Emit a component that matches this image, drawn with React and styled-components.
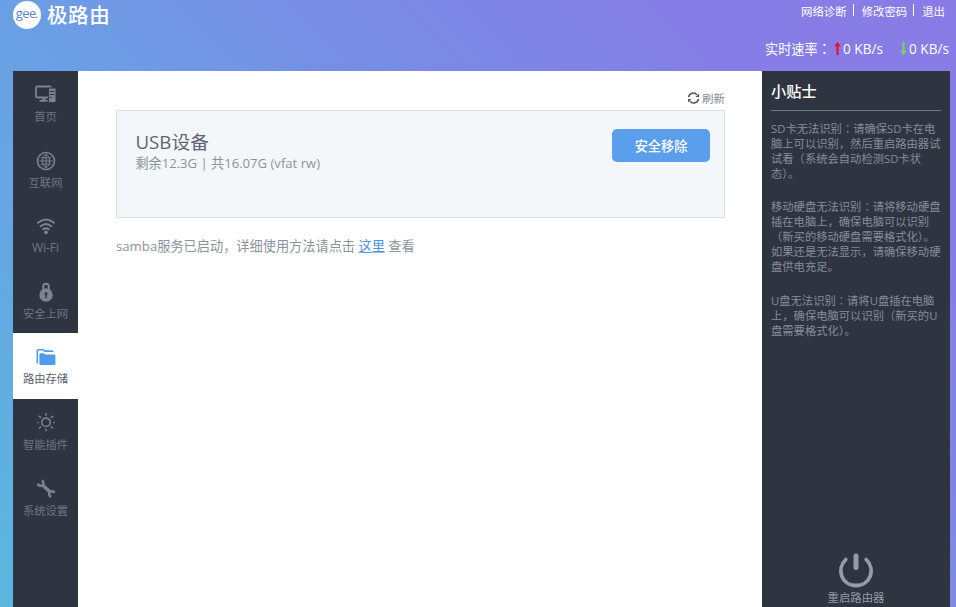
import styled, { createGlobalStyle } from "styled-components";

const menu = [
  { name: "首页", icon: "home" },
  { name: "互联网", icon: "globe" },
  { name: "Wi-Fi", icon: "wifi", latin: true },
  { name: "安全上网", icon: "lock" },
  { name: "路由存储", icon: "folder", active: true },
  { name: "智能插件", icon: "plugin" },
  { name: "系统设置", icon: "wrench" },
];

const tips = [
  [
    "SD卡无法识别：请确保SD卡在电",
    "脑上可以识别，然后重启路由器试",
    "试看（系统会自动检测SD卡状",
    "态）。",
  ],
  [
    "移动硬盘无法识别：请将移动硬盘",
    "插在电脑上，确保电脑可以识别",
    "（新买的移动硬盘需要格式化）。",
    "如果还是无法显示，请确保移动硬",
    "盘供电充足。",
  ],
  [
    "U盘无法识别：请将U盘插在电脑",
    "上，确保电脑可以识别（新买的U",
    "盘需要格式化）。",
  ],
];

const shapes = {
  home: (
    <>
      <rect x="2" y="2.5" width="15" height="11" rx="1.2" fill="none" stroke="currentColor" strokeWidth="1.8" />
      <path d="M8.5 13.5h3v3h-3zM5.5 16h8v1.8h-8z" />
      <rect x="14.6" y="4" width="7.4" height="14.6" rx="1" stroke="#2f3441" strokeWidth="1" />
      <path d="M16 7.5h4.400M16 10.5h4.400M16 13.5h2" stroke="#2f3441" />
    </>
  ),
  globe: (
    <g fill="none" stroke="currentColor">
      <circle cx="12" cy="11" r="8.5" strokeWidth="1.6" />
      <ellipse cx="12" cy="11" rx="3.600" ry="6.400" />
      <path d="M12 4.500v13M5.500 11h13M6.800 7.800h10.400M6.800 14.200h10.400" />
    </g>
  ),
  wifi: (
    <>
      <g fill="none" stroke="currentColor" strokeWidth="1.9" strokeLinecap="round">
        <path d="M4 7.8q8-6.8 16 0M6.6 11.2q5.4-4.6 10.8 0M9.2 14.4q2.8-2.4 5.6 0" />
      </g>
      <circle cx="12" cy="17.3" r="1.9" />
    </>
  ),
  lock: (
    <>
      <path d="M9.200 9V5.500a2.800 2.800 0 0 1 5.600 0V9" fill="none" stroke="currentColor" strokeWidth="2" />
      <circle cx="12" cy="14" r="6.700" />
      <circle cx="12" cy="12.8" r="1.5" fill="#2f3441" />
      <path d="M12 13v4.2" stroke="#2f3441" strokeWidth="1.4" />
    </>
  ),
  folder: (
    <>
      <path d="M3.3 17.5V5q0-1.3 1.3-1.3h4.6l1.6 1.4h7q1.2 0 1.2 1" fill="none" stroke="currentColor" strokeWidth="1.6" />
      <path d="M5.400 8.300q0-1 1-1H10l1.300 1.300h8.900q1.200 0 1.200 1.200v8q0 1.200-1.200 1.200H6.600q-1.200 0-1.200-1.200z" />
    </>
  ),
  plugin: (
    <g fill="none" stroke="currentColor" strokeWidth="1.6" strokeLinecap="round">
      <circle cx="12" cy="10.300" r="4.200" />
      <path d="M12 1.900v1.200M12 17.300v1.400M4.200 10.500h-.3M19.800 10.500h.4M5.300 4.300l1.300 1M18.700 4.300l-1.300 1M6.600 15l-1.200 1M17.400 15l1.200 1" />
    </g>
  ),
  wrench: (
    <g fill="none" stroke="currentColor">
      <path d="M3.800 5.600C4.600 8 7 8.300 8.500 7.200S9.600 3.400 7.800 2.400" strokeWidth="2.500" />
      <path d="M8.300 6.800l7.700 7.200" strokeWidth="3.400" />
      <path d="M20.600 14.800C19.200 12.700 16.800 12.800 15.700 14.200S15 18 17 19" strokeWidth="2.500" />
    </g>
  ),
};

const MenuIcon = ({ name }) => (
  <svg width="24" height="21" viewBox="0 0 24 21" fill="currentColor">
    {shapes[name]}
  </svg>
);

const Arrow = ({ down }) => (
  <ArrowIcon viewBox="0 0 7 13" $down={down}>
    <path d="M3.500 0 7 4.300H4.600V13H2.400V4.300H0z" />
  </ArrowIcon>
);

// keeps the full-width colon in the middle of its cell
const Line = ({ text }) => {
  const [head, tail] = text.split("：");
  return (
    <span>
      {head}
      {tail !== undefined && <Colon>：</Colon>}
      {tail}
    </span>
  );
};

const App = () => {
  return (
    <Page>
      <GlobalStyle />
      <Header>
        <Brand>
          <Badge>
            gee<i>.</i>
          </Badge>
          <BrandName>极路由</BrandName>
        </Brand>
        <HeaderRight>
          <Links>
            <a>网络诊断</a>
            <Divider />
            <a>修改密码</a>
            <Divider />
            <a>退出</a>
          </Links>
          <Speed>
            <SpeedLabel>
              <Line text="实时速率：" />
            </SpeedLabel>
            <Arrow />
            <Rate>0 KB/s</Rate>
            <Arrow down />
            <Rate>0 KB/s</Rate>
          </Speed>
        </HeaderRight>
      </Header>

      <Body>
        <Sidebar>
          {menu.map((item) => (
            <MenuItem key={item.name} $active={item.active}>
              <MenuIcon name={item.icon} />
              <MenuText $latin={item.latin}>{item.name}</MenuText>
            </MenuItem>
          ))}
        </Sidebar>

        <Main>
          <Refresh>
            <svg width="13" height="12" viewBox="0 0 13 12" fill="none" stroke="#555" strokeWidth="1.5">
              <path d="M1.600 5.200A4.700 4.700 0 0 1 10 2.900M11.400 6.800A4.700 4.700 0 0 1 3 9.100" />
              <path d="M12 1.500v3.600H8.600zM1 10.500V6.900h3.400z" fill="#555" stroke="none" />
            </svg>
            刷新
          </Refresh>
          <Device>
            <div>
              <DeviceName>USB设备</DeviceName>
              <DeviceInfo>剩余12.3G | 共16.07G (vfat rw)</DeviceInfo>
            </div>
            <Button>安全移除</Button>
          </Device>
          <Notice>
            samba服务已启动，详细使用方法请点击 <a>这里</a> 查看
          </Notice>
        </Main>

        <Tips>
          <TipsTitle>小贴士</TipsTitle>
          {tips.map((lines) => (
            <Tip key={lines[0]}>
              {lines.map((line) => (
                <Line key={line} text={line} />
              ))}
            </Tip>
          ))}
          <Restart>
            <svg width="36" height="36" viewBox="0 0 36 36" fill="none" stroke="currentColor" strokeLinecap="round">
              <path d="M7.800 6.500C-2 16 3.500 32.500 18 32.500S38 16 28.200 6.500" strokeWidth="3.800" />
              <path d="M18 3v11.500" strokeWidth="5" />
            </svg>
            重启路由器
          </Restart>
        </Tips>
      </Body>
    </Page>
  );
};

export default App;

const GlobalStyle = createGlobalStyle`
  * {
    box-sizing: border-box;
  }

  body {
    margin: 0;
    overflow: hidden;
    font-family: "Open Sans", "Noto Sans CJK SC", sans-serif;
  }
`;

const Page = styled.div`
  height: 100vh;
  display: flex;
  flex-direction: column;
  padding: 0 6px 0 13px;
  background: linear-gradient(45deg, #5bb6df 0%, #6b9fe5 39%, #768fe4 56%, #867de6 82%, #897be6 100%);
`;

const Header = styled.header`
  height: 71px;
  flex: none;
  display: flex;
  justify-content: space-between;
  color: #fff;
`;

const Brand = styled.div`
  display: flex;
  align-items: center;
  height: 29px;
  gap: 6px;
`;

const Badge = styled.div`
  width: 28px;
  height: 28px;
  border-radius: 50%;
  background: #fff;
  color: #6285cc;
  display: flex;
  align-items: center;
  justify-content: center;
  font-size: 13px;
  line-height: 20px;
  letter-spacing: -0.6px;
  padding-bottom: 3px;

  i {
    color: #e0668a;
  }
`;

const BrandName = styled.div`
  font-size: 20.5px;
  font-weight: 500;
  letter-spacing: 0.6px;
  line-height: 28px;
`;

const HeaderRight = styled.div`
  display: flex;
  flex-direction: column;
  align-items: flex-end;
`;

const Links = styled.div`
  display: flex;
  align-items: center;
  height: 22px;
  padding-right: 5px;
  font-size: 11.4px;
`;

const Divider = styled.span`
  width: 1px;
  height: 12px;
  margin: 0 8px 2px 6px;
  background: #fff;
`;

const Speed = styled.div`
  display: flex;
  align-items: center;
  height: 22px;
  margin-top: 15px;
  font-size: 13.6px;
`;

const SpeedLabel = styled.span`
  width: 69px;
  font-size: 13.2px;
  white-space: nowrap;
`;

const Colon = styled.span`
  font-family: "Noto Sans CJK JP", sans-serif;
  line-height: 1;
`;

const ArrowIcon = styled.svg`
  width: 7px;
  height: 13px;
  margin-right: 2px;
  fill: ${(props) => (props.$down ? "#7bd35a" : "#e8102c")};
  transform: ${(props) => (props.$down ? "rotate(180deg)" : "none")};
`;

const Rate = styled.span`
  width: 41px;
  white-space: nowrap;

  & + svg {
    margin-left: 16px;
  }
`;

const Body = styled.div`
  flex: 1;
  display: flex;
  min-height: 0;
`;

const Sidebar = styled.nav`
  width: 65px;
  flex: none;
  background: #2f3441;
`;

const MenuItem = styled.div`
  height: 65.6px;
  padding-top: 13px;
  display: flex;
  flex-direction: column;
  align-items: center;
  color: ${(props) => (props.$active ? "#4f9bee" : "#7b8390")};
  background: ${(props) => (props.$active ? "#fff" : "transparent")};

  > span {
    color: ${(props) => (props.$active ? "#59616d" : "#6e7684")};
  }
`;

const MenuText = styled.span`
  margin-top: 3px;
  font-size: ${(props) => (props.$latin ? "12px" : "11.3px")};
  line-height: 18px;
`;

const Main = styled.main`
  flex: 1;
  padding: 18px 37px 0 38px;
  background: #fff;
`;

const Refresh = styled.div`
  display: flex;
  justify-content: flex-end;
  align-items: center;
  gap: 2px;
  height: 17px;
  margin-bottom: 4px;
  font-size: 11.5px;
  color: #7e8a96;
`;

const Device = styled.section`
  height: 108px;
  display: flex;
  justify-content: space-between;
  padding: 18px 14px 0 18.5px;
  border: 1px solid #dcdfe2;
  background: #f3f7fa;
`;

const DeviceName = styled.div`
  font-size: 18.7px;
  line-height: 26px;
  color: #5d6475;
`;

const DeviceInfo = styled.div`
  font-size: 13.1px;
  line-height: 16px;
  color: #8b939c;
`;

const Button = styled.button`
  width: 98px;
  height: 33px;
  padding: 0;
  border: none;
  border-radius: 5px;
  background: #5a9eec;
  color: #fff;
  font: 500 13.2px "Noto Sans CJK SC", sans-serif;
`;

const Notice = styled.p`
  margin: 18px 0 0;
  font-size: 13.2px;
  line-height: 20px;
  color: #8b939c;

  a {
    color: #4c95dd;
    text-decoration: underline;
    text-decoration-color: #8fbce8;
  }
`;

const Tips = styled.aside`
  width: 188px;
  flex: none;
  display: flex;
  flex-direction: column;
  padding: 0 9px;
  background: #2f3441;
`;

const TipsTitle = styled.h2`
  height: 40px;
  margin: 0 0 9.5px;
  border-bottom: 1px solid #747a80;
  font-size: 15.2px;
  font-weight: 500;
  line-height: 40px;
  color: #fff;
`;

const Tip = styled.p`
  display: flex;
  flex-direction: column;
  margin: 0 0 18.5px;
  font-size: 11.3px;
  line-height: 15px;
  color: #858d9f;
  white-space: nowrap;
`;

const Restart = styled.div`
  margin-top: auto;
  display: flex;
  flex-direction: column;
  align-items: center;
  font-size: 11.4px;
  line-height: 18px;
  color: #929cab;
`;
